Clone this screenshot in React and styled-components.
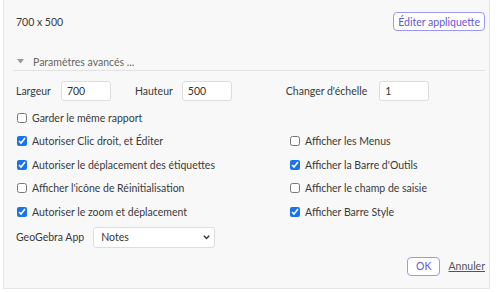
import React from 'react'
import styled, { createGlobalStyle } from 'styled-components'

const Global = createGlobalStyle`
  body {
    margin: 0;
    background: #ffffff;
    font-family: Lato, "Liberation Sans", sans-serif;
    font-size: 10.5px;
    color: #3a3a3a;
  }
`

const Panel = styled.div`
  box-sizing: border-box;
  width: 487px;
  height: 290px;
  margin: -1px 0 0 3px;
  padding: 12px 4px 0 9px;
  background: #f8f8f8;
  border: 1px solid #e4e4e4;
`

const TopRow = styled.div`
  display: flex;
  align-items: center;
  justify-content: space-between;
  height: 19px;
  padding-left: 3px;
`

const OutlineButton = styled.button`
  box-sizing: border-box;
  height: ${p => p.$h || 19}px;
  padding: 0 ${p => p.$px || 6}px;
  background: #ffffff;
  border: 1px solid #9d97f5;
  border-radius: 4px;
  color: #6557d2;
  font-family: inherit;
  font-size: 10.5px;
  cursor: pointer;
`

const SectionHeader = styled.div`
  display: flex;
  align-items: center;
  gap: 9px;
  margin-top: 22px;
  height: 17px;
  padding-left: 4px;
  border-bottom: 1px solid #e2e2e2;
  color: #666666;
`

const SizeRow = styled.div`
  display: flex;
  align-items: center;
  margin-top: 10px;
  padding-left: 3px;
`

const FieldLabel = styled.span`
  margin-right: ${p => p.$gap}px;
`

const TextInput = styled.input`
  box-sizing: border-box;
  width: 50px;
  height: 20px;
  margin-right: ${p => p.$after || 0}px;
  padding: 0 5px;
  background: #ffffff;
  border: 1px solid #dddddd;
  border-radius: 3px;
  font-family: inherit;
  font-size: 10.5px;
  color: #333333;
  outline: none;
`

const CheckGrid = styled.div`
  display: grid;
  grid-template-columns: 273px 1fr;
  grid-auto-rows: 23.5px;
  margin-top: 5px;
  padding-left: 4px;
`

const CheckItem = styled.label`
  display: flex;
  align-items: center;
  gap: 5px;
  grid-column: ${p => p.$col};
  grid-row: ${p => p.$row};
`

const Box = styled.input`
  width: 10px;
  height: 10px;
  margin: 0;
  accent-color: #1a73e8;
`

const AppRow = styled.div`
  display: flex;
  align-items: center;
  margin-top: 3px;
  padding-left: 3px;
`

const SelectWrap = styled.div`
  position: relative;
  margin-left: 9px;
`

const Select = styled.select`
  box-sizing: border-box;
  width: 122px;
  height: 21px;
  padding: 0 7px;
  appearance: none;
  background: #ffffff;
  border: 1px solid #dddddd;
  border-radius: 3px;
  font-family: inherit;
  font-size: 10.5px;
  color: #333333;
`

const Chevron = styled.svg`
  position: absolute;
  right: 5px;
  top: 8px;
  pointer-events: none;
`

const Footer = styled.div`
  display: flex;
  align-items: center;
  justify-content: flex-end;
  gap: 8px;
  margin-top: 9px;
`

const LinkButton = styled.a`
  color: #555555;
  text-decoration: underline;
  cursor: pointer;
`

const left = [
  ['Garder le même rapport', false],
  ['Autoriser Clic droit, et Éditer', true],
  ['Autoriser le déplacement des étiquettes', true],
  ["Afficher l'icône de Réinitialisation", false],
  ['Autoriser le zoom et déplacement', true],
]

const right = [
  ['Afficher les Menus', false],
  ["Afficher la Barre d'Outils", true],
  ['Afficher le champ de saisie', false],
  ['Afficher Barre Style', true],
]

export default function App() {
  return (
    <>
      <Global />
      <Panel>
        <TopRow>
          <span>700 x 500</span>
          <OutlineButton $px={4}>Éditer appliquette</OutlineButton>
        </TopRow>

        <SectionHeader>
          <svg width="7" height="5" viewBox="0 0 7 5">
            <path d="M0 0 H7 L3.5 4.5 Z" fill="#999999" />
          </svg>
          <span>Paramètres avancés ...</span>
        </SectionHeader>

        <SizeRow>
          <FieldLabel $gap={10}>Largeur</FieldLabel>
          <TextInput defaultValue="700" $after={24} />
          <FieldLabel $gap={9}>Hauteur</FieldLabel>
          <TextInput defaultValue="500" $after={54} />
          <FieldLabel $gap={12}>Changer d'échelle</FieldLabel>
          <TextInput defaultValue="1" />
        </SizeRow>

        <CheckGrid>
          {left.map(([text, on], i) => (
            <CheckItem key={text} $col={1} $row={i + 1}>
              <Box type="checkbox" defaultChecked={on} />
              <span>{text}</span>
            </CheckItem>
          ))}
          {right.map(([text, on], i) => (
            <CheckItem key={text} $col={2} $row={i + 2}>
              <Box type="checkbox" defaultChecked={on} />
              <span>{text}</span>
            </CheckItem>
          ))}
        </CheckGrid>

        <AppRow>
          <span>GeoGebra App</span>
          <SelectWrap>
            <Select defaultValue="notes">
              <option value="notes">Notes</option>
            </Select>
            <Chevron width="7" height="5" viewBox="0 0 7 5">
              <path d="M0.8 0.8 L3.5 3.6 L6.2 0.8" fill="none" stroke="#333" strokeWidth="1.4" />
            </Chevron>
          </SelectWrap>
        </AppRow>

        <Footer>
          <OutlineButton $h={19} $px={8}>OK</OutlineButton>
          <LinkButton>Annuler</LinkButton>
        </Footer>
      </Panel>
    </>
  )
}
